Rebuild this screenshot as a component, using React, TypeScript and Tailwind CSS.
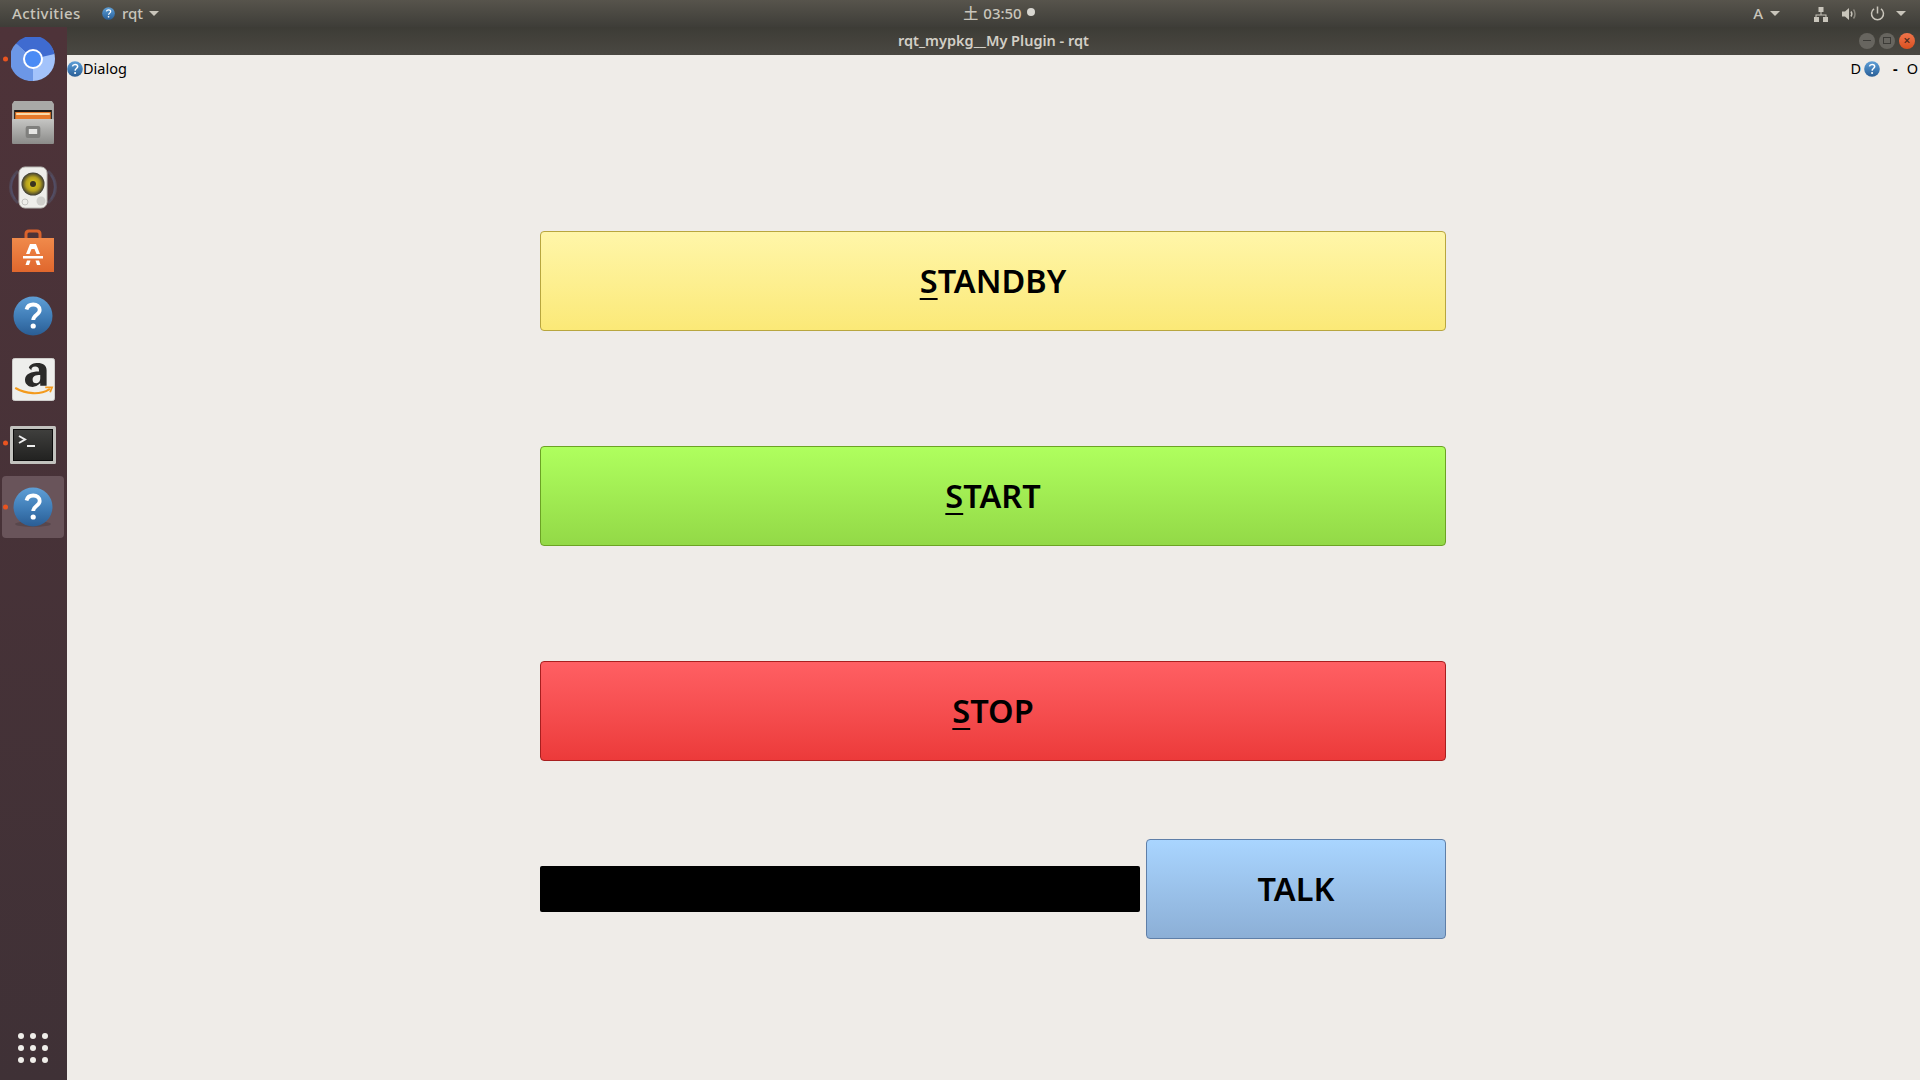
import { useId } from "react";

function Help({ size = 40, shadow = false }: { size?: number; shadow?: boolean }) {
  const id = useId();
  return (
    <svg width={size} height={size} viewBox="0 0 40 40" className="block shrink-0">
      <defs>
        <linearGradient id={id} x1="0" y1="0" x2="0" y2="1">
          <stop offset="0" stopColor="#5f9fd6" />
          <stop offset="0.55" stopColor="#3f7cb6" />
          <stop offset="1" stopColor="#2a5d94" />
        </linearGradient>
      </defs>
      {shadow && <ellipse cx="20" cy="37" rx="18" ry="3" fill="#000" opacity="0.15" />}
      <circle cx="20" cy="20" r="19.5" fill={`url(#${id})`} />
      <path d="M13.5 13.5c.8-3.2 3.4-5 6.7-5 3.800 0 6.500 2.200 6.500 5.500 0 4.800-6.200 4.800-6.500 10" fill="none" stroke="#fff" strokeWidth="3.800" />
      <circle cx="20.200" cy="30" r="2.600" fill="#fff" />
    </svg>
  );
}

function Chromium() {
  return (
    <svg width="44" height="44" viewBox="0 0 44 44">
      <circle cx="22" cy="22" r="22" fill="#a3c3fb" />
      <path d="M22 22 L5 6.500 A22 22 0 0 1 43.500 17 Z" fill="#3f6bd0" />
      <path d="M22 22 L5 6.500 A22 22 0 0 0 22 44 Z" fill="#6c97e6" />
      <circle cx="22" cy="22" r="10" fill="#fff" />
      <circle cx="22" cy="22" r="8" fill="#4a8bf5" />
    </svg>
  );
}

function Files() {
  const id = useId();
  return (
    <svg width="44" height="43" viewBox="0 0 42 43" preserveAspectRatio="none">
      <defs>
        <linearGradient id={id} x1="0" y1="0" x2="0" y2="1">
          <stop offset="0" stopColor="#c6c6c4" />
          <stop offset="1" stopColor="#8b8b89" />
        </linearGradient>
      </defs>
      <path d="M3 0h36l2 3v37l-1 3H2l-1-3V3z" fill="#a9a9a7" />
      <rect x="3" y="9" width="36" height="11" fill="#1f1a17" />
      <rect x="4" y="11" width="34" height="9" fill="#e77a2b" />
      <rect x="5" y="12" width="32" height="2" fill="#fbd9a8" />
      <rect x="1" y="18" width="40" height="25" rx="1" fill={`url(#${id})`} />
      <rect x="14" y="25" width="14" height="12" rx="2" fill="#7f7f7d" />
      <rect x="17" y="28" width="8" height="5" fill="#e6e6e4" />
    </svg>
  );
}

function Speaker() {
  const id = useId();
  return (
    <svg width="48" height="44" viewBox="0 0 48 44">
      <defs>
        <radialGradient id={id}>
          <stop offset="0" stopColor="#e6d21f" />
          <stop offset="0.6" stopColor="#b5a11c" />
          <stop offset="1" stopColor="#3b3a34" />
        </radialGradient>
      </defs>
      <path d="M9 6C-1 15 -1 29 9 38M39 6c10 9 10 23 0 32" fill="none" stroke="#5d6a86" strokeWidth="3" opacity="0.35" />
      <path d="M6 10c-5 8-5 16 0 24M42 10c5 8 5 16 0 24" fill="none" stroke="#55618a" strokeWidth="2" opacity="0.3" />
      <rect x="10" y="2" width="28" height="41" rx="6" fill="#eeeeea" stroke="#b9b9b4" />
      <circle cx="24" cy="19" r="11.500" fill={`url(#${id})`} />
      <circle cx="24" cy="19" r="3" fill="#3a3520" />
      <circle cx="16" cy="37" r="3" fill="none" stroke="#c4c4c0" />
      <circle cx="32" cy="36" r="4.500" fill="#cfcfcb" />
    </svg>
  );
}

function Store() {
  const id = useId();
  return (
    <svg width="44" height="44" viewBox="0 0 44 44">
      <defs>
        <linearGradient id={id} x1="0" y1="0" x2="0" y2="1">
          <stop offset="0" stopColor="#f08a4b" />
          <stop offset="1" stopColor="#e0672d" />
        </linearGradient>
      </defs>
      <path d="M15 11V5c0-2 1-3 3-3h8c2 0 3 1 3 3v6" fill="none" stroke="#d9622c" strokeWidth="3" />
      <path d="M1 9h42v34H1z" fill={`url(#${id})`} />
      <path d="M19 15h6l4 10h-3.500l-2-5h-3l-2 5H15z" fill="#fff" />
      <rect x="12" y="27" width="20" height="2.500" fill="#fff" />
      <path d="M16 31.500h3.500L18 36h-3.500zM24.500 31.500H28l1.500 4.500H26z" fill="#fff" />
    </svg>
  );
}

function Amazon() {
  return (
    <svg width="43" height="43" viewBox="0 0 44 44">
      <rect x="0.500" y="0.500" width="43" height="43" rx="2" fill="#eeeeec" stroke="#cfcfcd" />
      <g transform="translate(-1 -4.600) scale(1.300 1.220)">
        <path d="M14 12c1-3 4-4 7-4 4 0 7 2 7 6v13h-5v-2c-2 2-4 3-6 3-3 0-6-2-6-6 0-5 5-7 11-7v-1c0-2-1-3-3-3s-3 1-3 3z M23 18c-4 0-6 1-6 4 0 2 1 3 3 3s3-2 3-4z" fill="#2b2a29" fillRule="evenodd" />
      </g>
      <path d="M4 31c10 6 25 7 34 1" fill="none" stroke="#f39a1d" strokeWidth="2.200" strokeLinecap="round" />
      <path d="M34 30h7l-2 5" fill="none" stroke="#f39a1d" strokeWidth="1.800" />
    </svg>
  );
}

function Terminal() {
  const id = useId();
  return (
    <svg width="46" height="38" viewBox="0 0 46 38" className="mt-1">
      <defs>
        <linearGradient id={id} x1="0" y1="0" x2="0" y2="1">
          <stop offset="0" stopColor="#3f3f3d" />
          <stop offset="1" stopColor="#222221" />
        </linearGradient>
      </defs>
      <rect width="46" height="38" rx="1.500" fill="#c2c2be" />
      <rect x="3" y="3" width="40" height="32" fill="#0c0c0c" />
      <rect x="4" y="4" width="38" height="30" fill={`url(#${id})`} />
      <path d="M9 10l6 3.500-6 3.500" fill="none" stroke="#eee" strokeWidth="2" />
      <rect x="17" y="19" width="8" height="2" fill="#eee" />
    </svg>
  );
}

function Caret() {
  return <span className="block h-0 w-0 border-x-[5px] border-t-[5px] border-x-transparent border-t-[#c9c5bb]" />;
}

function ActionButton({ label, hint, className }: { label: string; hint?: boolean; className: string }) {
  return (
    <button className={`flex h-[100px] items-center justify-center rounded-[4px] border text-[32.5px] font-semibold text-black ${className}`}>
      {hint ? (
        <>
          <span className="underline decoration-[1.5px] underline-offset-[5px]">{label[0]}</span>
          {label.slice(1)}
        </>
      ) : (
        label
      )}
    </button>
  );
}

const dockItems = [
  { icon: <Chromium />, running: true },
  { icon: <div className="-mt-px"><Files /></div> },
  { icon: <Speaker /> },
  { icon: <Store /> },
  { icon: <div className="mt-[2px]"><Help size={40} /></div> },
  { icon: <Amazon /> },
  { icon: <Terminal />, running: true },
];

export default function App() {
  return (
    <div className="flex h-screen w-screen flex-col overflow-hidden bg-[#efece8] font-['Noto_Sans',sans-serif]">
      <header className="grid h-[27px] shrink-0 grid-cols-3 items-center bg-gradient-to-b from-[#57544c] to-[#3e3d38] text-[15px] font-medium text-[#c9c5bb]">
        <div className="flex items-center">
          <span className="ml-3 w-[90px] tracking-[0.4px]">Activities</span>
          <Help size={13} />
          <span className="ml-[7px]">rqt</span>
          <span className="ml-[6px]"><Caret /></span>
        </div>
        <div className="flex items-center justify-center gap-[5px] pl-[78px]">
          <span className="font-['Noto_Sans_CJK_JP',sans-serif]">土</span>
          <span>03:50</span>
          <span className="mb-[3px] h-2 w-2 rounded-full bg-[#d8d6d0]" />
        </div>
        <div className="flex items-center justify-end pr-[14px]">
          <span className="text-[15px]">A</span>
          <span className="ml-[7px]"><Caret /></span>
          <svg width="16" height="16" viewBox="0 0 16 16" className="ml-[33px]" fill="#c9c5bb">
            <rect x="5.500" y="1" width="5" height="5" />
            <rect x="1" y="11" width="5" height="5" />
            <rect x="10" y="11" width="5" height="5" />
            <path d="M7.500 6h1v2.500h5V11h-1V9.500h-9V11h-1V8.500h5z" />
          </svg>
          <svg width="16" height="16" viewBox="0 0 16 16" className="ml-[12px]">
            <path d="M1 5.500h3L8 2v12L4 10.500H1z" fill="#c9c5bb" />
            <path d="M10 5.500c1 1.500 1 3.500 0 5" fill="none" stroke="#c9c5bb" strokeWidth="1.500" />
            <path d="M12.500 3.500c2 2.500 2 6.500 0 9" fill="none" stroke="#8b887f" strokeWidth="1.500" />
          </svg>
          <svg width="15" height="15" viewBox="0 0 15 15" className="ml-[13px]" fill="none" stroke="#c9c5bb" strokeWidth="1.500">
            <path d="M7.500 0.500v7" />
            <path d="M4 2.800a6 6 0 1 0 7 0" />
          </svg>
          <span className="ml-[11px]"><Caret /></span>
        </div>
      </header>

      <div className="flex min-h-0 flex-1">
        <nav className="relative flex w-[67px] shrink-0 flex-col bg-gradient-to-b from-[#4e3339] to-[#3f3136]">
          {dockItems.map((item, i) => (
            <div key={i} className="relative flex h-[64px] items-center justify-center pr-px">
              {item.running && <span className="absolute left-[3px] top-1/2 h-[5px] w-[5px] -translate-y-1/2 rounded-full bg-[#e95420]" />}
              {item.icon}
            </div>
          ))}
          <div className="relative flex h-[64px] items-center justify-center pr-px">
            <span className="absolute left-[3px] top-1/2 h-[5px] w-[5px] -translate-y-1/2 rounded-full bg-[#e95420]" />
            <div className="flex h-[62px] w-[62px] items-center justify-center rounded-[4px] bg-[#69545a]">
              <Help size={40} shadow />
            </div>
          </div>
          <div className="mt-auto mb-[17px] grid grid-cols-3 gap-[6px] self-center pr-px">
            {Array.from({ length: 9 }).map((_, i) => (
              <span key={i} className="h-[6px] w-[6px] rounded-full bg-[#f0eeea]" />
            ))}
          </div>
        </nav>

        <main className="flex min-w-0 flex-1 flex-col">
          <div className="relative flex h-[28px] shrink-0 items-center justify-center bg-gradient-to-b from-[#3d3c36] to-[#4a4842] pb-px text-[14.500px] font-semibold text-[#d3cfc6]">
            rqt_mypkg__My Plugin - rqt
            <div className="absolute right-[5px] flex items-center gap-1">
              <span className="flex h-4 w-4 items-center justify-center rounded-full bg-[#67655f]"><span className="h-[1.500px] w-2 bg-[#3c3b37]" /></span>
              <span className="flex h-4 w-4 items-center justify-center rounded-full bg-[#67655f]"><span className="h-[7px] w-[8px] border border-[#3c3b37]" /></span>
              <span className="flex h-4 w-4 items-center justify-center rounded-full bg-gradient-to-b from-[#f0744a] to-[#d9501e] text-[12px] leading-none text-[#4a2a1c]">×</span>
            </div>
          </div>

          <div className="flex h-[26px] shrink-0 items-center justify-between pt-px text-[14.500px] text-black">
            <div className="flex items-center">
              <Help size={16} />
              <span>Dialog</span>
            </div>
            <div className="flex items-center pr-[2px]">
              <span>D</span>
              <span className="ml-[3px]"><Help size={16} /></span>
              <span className="ml-[13px] font-bold">-</span>
              <span className="ml-[9px]">O</span>
            </div>
          </div>

          <div className="ml-[473px] mt-[150px] flex w-[906px] flex-col gap-[115px]">
            <ActionButton label="STANDBY" hint className="border-[#b8a63e] bg-gradient-to-b from-[#fff6a8] to-[#fbe977]" />
            <ActionButton label="START" hint className="border-[#6ca324] bg-gradient-to-b from-[#afff5e] to-[#93d947]" />
            <ActionButton label="STOP" hint className="border-[#a81f1f] bg-gradient-to-b from-[#ff5f63] to-[#ec3a3a]" />
          </div>

          <div className="ml-[473px] mt-[78px] flex w-[906px] items-center gap-[6px]">
            <div className="h-[46px] flex-1 rounded-[2px] bg-black" />
            <ActionButton label="TALK" className="w-[300px] border-[#5f7fa8] bg-gradient-to-b from-[#a9d5ff] to-[#8cafd6]" />
          </div>
        </main>
      </div>
    </div>
  );
}
